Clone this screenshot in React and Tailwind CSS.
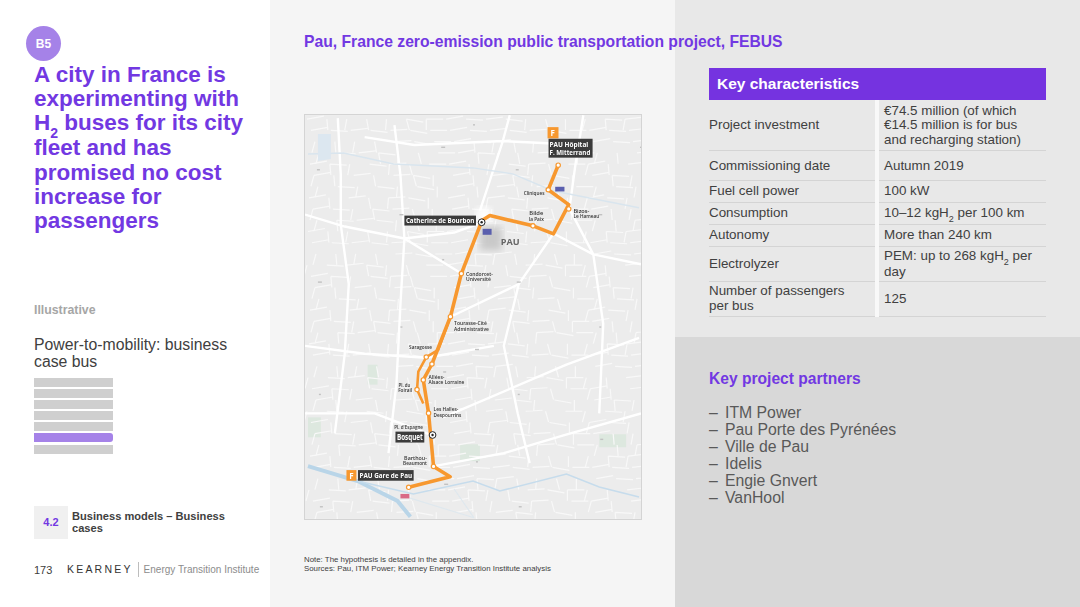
const rows = [
  { label: 'Project investment', value: <>€74.5 million (of which<br />€14.5 million is for bus<br />and recharging station)</>, h: 'h-[51px]' },
  { label: 'Commissioning date', value: 'Autumn 2019', h: 'h-[30px]' },
  { label: 'Fuel cell power', value: '100 kW', h: 'h-[21.5px]' },
  { label: 'Consumption', value: <>10–12 kgH<Sub /> per 100 km</>, h: 'h-[22px]' },
  { label: 'Autonomy', value: 'More than 240 km', h: 'h-[22px]' },
  { label: 'Electrolyzer', value: <>PEM: up to 268 kgH<Sub /> per<br />day</>, h: 'h-[35px]' },
  { label: <>Number of passengers<br />per bus</>, value: '125', h: 'h-[35px]' },
];

const partners = ['ITM Power', 'Pau Porte des Pyrénées', 'Ville de Pau', 'Idelis', 'Engie Gnvert', 'VanHool'];

function Sub() {
  return <sub className="text-[9px] leading-none align-[-3px]">2</sub>;
}

// main roads of the map, in map coordinates
const bigRoads = [
  'M33 3 L36 60 L36 110 L44 170 L40 240 L30 320',
  'M0 100 L40 112 L100 124 L150 118 L178 108',
  'M176 96 L199 26 L206 0',
  'M139 304 L263 251 L336 224',
  'M0 232 L60 240 L122 244 L190 232',
  'M0 300 L70 300 L128 322',
  'M338 150 L290 140 L250 119 L215 170 L200 232 L214 300 L226 350',
  'M280 0 L272 50 L266 94 L290 140 L300 210 L296 300',
  'M130 353 L200 340 L260 322 L338 300',
  'M60 22 L110 30 L199 26 L280 30',
  'M90 10 L96 60 L100 124 L96 190 L92 270 L84 340',
  'M146 203 L215 170 M157 159 L100 124',
];

// street mesh: rough but deterministic
const minorRoads = [];
const flecks = [];
for (let i = 0; i < 36; i++) {
  const y = 4 + i * 11.3;
  for (let j = 0; j < 17; j++) {
    const x = 2 + j * 20 + ((i * 17) % 13);
    const tilt = ((i * 7 + j * 11) % 7) - 3;
    const hash = (i * 13 + j * 29 + i * j) % 10;
    if (hash < 6) minorRoads.push(`M${x} ${y} L${x + 17} ${y + tilt}`);
    if (hash > 3) minorRoads.push(`M${x} ${y} L${x + tilt} ${y + 11}`);
    if (hash === 2 && j % 2 === 0) flecks.push([x + 7, y + 5, 2 + (i % 3), 1.4]);
  }
}

const stops = [
  [254.7, 50.3], [244.7, 75], [265.3, 94.3], [229.3, 111.3], [157.3, 159.3], [146.3, 202.7],
  [127.7, 250.3], [122, 243.3], [119, 266.3], [112.7, 276], [124.3, 299.7], [129.3, 353.3], [104.3, 374.3],
];

// x, baseline, text, anchor, width
const labels = [
  [241, 80, 'Cliniques', 'end', 21], [270, 98.3, 'Bizos-', 'start', 16], [270, 103.7, 'Le Hameau', 'start', 26],
  [232.7, 100.3, 'Bilde', 'middle', 14], [232.7, 106.7, 'la Paix', 'middle', 15],
  [162, 161.7, 'Condorcet-', 'start', 27], [162, 167.3, 'Université', 'start', 25],
  [150, 211, 'Tourasse-Cité', 'start', 33], [150, 216.7, 'Administrative', 'start', 35],
  [127.7, 235.7, 'Saragosse', 'end', 23], [124.3, 265, 'Allées-', 'start', 16], [124.3, 270, 'Alsace Lorraine', 'start', 36],
  [106, 273, 'Pl. du', 'end', 12], [107.7, 278.3, 'Foirail', 'end', 14],
  [129.3, 297.7, 'Les Halles-', 'start', 25], [129.3, 303.3, 'Despourrins', 'start', 28],
  [118.7, 316, "Pl. d'Espagne", 'end', 29], [122.7, 346.7, 'Barthou-', 'end', 23], [122.7, 352, 'Beaumont', 'end', 24],
];

function MapLabel({ x, y, w, h, text, size = 8 }) {
  return (
    <g>
      <rect x={x} y={y} width={w} height={h} fill="#3b3b3b" />
      <text x={x + 1.5} y={y + h - 2.6} fontSize={size} fontWeight="700" fill="#fff" textLength={w - 3} lengthAdjust="spacingAndGlyphs">{text}</text>
    </g>
  );
}

function RouteMap() {
  return (
    <svg viewBox="0 0 338 406" className="w-[338px] h-[406px] block border border-[#d4d4d4] blur-[0.4px]" fontFamily="Open Sans, Liberation Sans, sans-serif">
      <defs>
        <filter id="soft"><feGaussianBlur stdDeviation="4" /></filter>
      </defs>
      <rect width="338" height="406" fill="#ececec" />
      {/* parks */}
      <rect x="3" y="304" width="13" height="20" fill="#dde8df" />
      <rect x="63" y="251" width="10" height="20" fill="#dde8df" />
      <rect x="296" y="321" width="27" height="13" fill="#dde8df" />
      <rect x="156" y="331" width="20" height="17" fill="#dde8df" />
      <path d={minorRoads.join(' ')} stroke="#f8f8f8" strokeWidth="1.2" fill="none" />
      <path d={bigRoads.join(' ')} stroke="#ffffff" strokeWidth="2.4" fill="none" strokeLinejoin="round" />
      {flecks.map(([x, y, w, h]) => (
        <rect key={`${x}-${y}`} x={x} y={y} width={w} height={h} fill="#c2c2c2" />
      ))}
      {/* shadow around the centre */}
      <rect x="176" y="112" width="22" height="24" fill="#c9c9c9" filter="url(#soft)" />
      <circle cx="180" cy="100" r="8" fill="#fff" filter="url(#soft)" />
      {/* water */}
      <path d="M3 39 L39 38 L89 49 L169 53 L209 59 L249 76 L336 93" stroke="#d9e5ee" strokeWidth="1.5" fill="none" />
      <path d="M13 19 L26 19 L26 44 L13 46 Z" fill="#dce7f0" />
      <path d="M3 353 L53 368 L93 388 L106 404" stroke="#b9d5e8" strokeWidth="4" fill="none" />
      <path d="M53 368 L109 381 L169 368 L196 378 L263 361 L296 374 L336 384" stroke="#c6dcec" strokeWidth="1.5" fill="none" />
      <path d="M150 376 L170 405 M105 385 L170 405" stroke="#dfe8ee" strokeWidth="1.2" fill="none" />

      {/* route */}
      <path
        d="M254.7 50.3 L244.7 75 L265.3 90 L250 119.3 L229.3 111.3 L186 101 L178 106 L157.3 159.3 L146.3 202.7 L127.7 250.3 L119 266.3 L124.3 299.7 L129.3 353.3 L146 363.7 L104.3 374.3"
        stroke="#f7982f" strokeWidth="3.6" fill="none" strokeLinejoin="round"
      />
      <path d="M146.3 202.7 L134 236 L122 243.3 L114 258 L112.7 276 L119 290" stroke="#f7982f" strokeWidth="2.6" fill="none" strokeLinejoin="round" />
      {stops.map(([x, y]) => (
        <circle key={`${x}-${y}`} cx={x} cy={y} r="2.2" fill="#fff" stroke="#f7982f" strokeWidth="1.2" />
      ))}
      <circle cx="177.7" cy="107.7" r="3.4" fill="#fff" stroke="#222" strokeWidth="1" />
      <circle cx="177.7" cy="107.7" r="1.2" fill="#222" />
      <circle cx="128.3" cy="321.7" r="3.4" fill="#fff" stroke="#222" strokeWidth="1" />
      <circle cx="128.3" cy="321.7" r="1.2" fill="#222" />

      {/* stickers */}
      <rect x="244" y="12" width="11" height="11.3" fill="#f7982f" />
      <text x="247" y="21" fontSize="8" fontWeight="700" fill="#fff">F</text>
      <rect x="245" y="23.7" width="44.3" height="19" fill="#3b3b3b" />
      <text x="246" y="32" fontSize="7" fontWeight="700" fill="#fff" textLength="39" lengthAdjust="spacingAndGlyphs">PAU Hôpital</text>
      <text x="246" y="40.5" fontSize="7" fontWeight="700" fill="#fff" textLength="41" lengthAdjust="spacingAndGlyphs">F. Mitterrand</text>
      <MapLabel x={100} y={101} w={72} h={10} text="Catherine de Bourbon" size={7.4} />
      <MapLabel x={91} y={318.3} w={29} h={11} text="Bosquet" size={8.4} />
      <rect x="41.7" y="357" width="10" height="10.7" fill="#f7982f" />
      <text x="44.5" y="365.5" fontSize="8" fontWeight="700" fill="#fff">F</text>
      <MapLabel x={53.3} y={357} w={56} h={10.7} text="PAU Gare de Pau" size={7.6} />
      <text x="197" y="131" fontSize="9" fontWeight="700" fill="#666" textLength="19" lengthAdjust="spacingAndGlyphs">PAU</text>
      <rect x="178.7" y="114.3" width="9" height="6" fill="#5a5fae" />
      <rect x="251.7" y="72" width="9.3" height="4.7" fill="#5a5fae" />
      <rect x="96" y="381" width="9" height="4.5" fill="#d96a86" />

      {labels.map(([x, y, text, anchor, width]) => (
        <text key={text} x={x} y={y} fontSize="5.6" fontWeight="600" fill="#333" textAnchor={anchor} textLength={width} lengthAdjust="spacingAndGlyphs">{text}</text>
      ))}
    </svg>
  );
}

export default function App() {
  return (
    <div className="w-[1080px] h-[607px] flex overflow-hidden bg-white font-['Liberation_Sans',Arial,sans-serif] text-[#404040]">
      {/* Left column */}
      <div className="w-[270px] shrink-0 flex flex-col pl-[34px] pr-2 pt-[26px]">
        <div className="w-[35px] h-[35px] -ml-2 rounded-full bg-[#a582e8] flex items-center justify-center text-white text-[12px] font-bold">B5</div>
        <h1 className="mt-[2px] text-[22.5px] leading-[24.2px] font-bold text-[#7238e2]">
          A city in France is<br />experimenting with<br />H<sub className="text-[14px] leading-none align-[-4px]">2</sub> buses for its city<br />fleet and has<br />promised no cost<br />increase for<br />passengers
        </h1>
        <div className="mt-[70px] text-[12.3px] leading-[14px] font-bold text-[#a6a6a6]">Illustrative</div>
        <div className="mt-[19px] text-[15.8px] leading-[17px] text-[#404040] whitespace-nowrap">Power-to-mobility: business<br />case bus</div>
        <div className="mt-[8px] flex flex-col gap-[2.5px] w-[79px]">
          {[0, 1, 2, 3, 4].map((i) => <div key={i} className="h-[8.5px] bg-[#cfcfcf]" />)}
          <div className="h-[9px] rounded-r-[3px] bg-[#a582e8]" />
          <div className="h-[9px] bg-[#cfcfcf]" />
        </div>
        <div className="mt-[52px] flex items-center gap-[4px]">
          <div className="w-[34px] h-[33px] bg-[#f0f0f0] flex items-center justify-center text-[11px] font-bold text-[#7238e2]">4.2</div>
          <div className="text-[11.1px] leading-[12.4px] font-bold text-[#404040]">Business models – Business<br />cases</div>
        </div>
        <div className="mt-[23px] flex items-center text-[11px] text-[#404040]">
          <span className="w-[33px] shrink-0">173</span>
          <span className="tracking-[2.2px] text-[10.5px] text-[#333] shrink-0">KEARNEY</span>
          <span className="ml-[5px] h-[15px] border-l border-[#bdbdbd] shrink-0" />
          <span className="ml-[5px] text-[10px] text-[#8c8c8c] whitespace-nowrap">Energy Transition Institute</span>
        </div>
      </div>

      {/* Middle column */}
      <div className="w-[405px] shrink-0 bg-[#f5f5f5] pl-[34px] pt-[33px] flex flex-col">
        <h2 className="text-[15.7px] leading-[18px] font-bold text-[#7238e2] whitespace-nowrap relative z-10">Pau, France zero-emission public transportation project, FEBUS</h2>
        <div className="mt-[63px]"><RouteMap /></div>
        <div className="mt-[36px] text-[7.87px] leading-[8.6px] text-[#404040]">
          Note: The hypothesis is detailed in the appendix.<br />Sources: Pau, ITM Power; Kearney Energy Transition Institute analysis
        </div>
      </div>

      {/* Right column */}
      <div className="flex-1 flex flex-col">
        <div className="h-[337px] bg-[#e8e8e8] pl-[34px] pr-[34px] pt-[68px]">
          <div className="h-[32px] bg-[#7533e0] text-white font-bold text-[15.5px] flex items-center pl-[8px]">Key characteristics</div>
          {rows.map((row, i) => (
            <div key={i} className={`flex ${row.h} text-[13.4px] leading-[14.6px]`}>
              <div className="w-[166px] flex items-center pt-[1px] border-b border-[#d4d4d4]"><span>{row.label}</span></div>
              <div className="w-[4px] bg-[#f8f8f8]" />
              <div className="flex-1 flex items-center pl-[5px] pt-[1px] border-b border-[#d4d4d4]"><span>{row.value}</span></div>
            </div>
          ))}
        </div>
        <div className="flex-1 bg-[#d8d8d8] pl-[34px] pt-[33px]">
          <div className="text-[15.6px] leading-[18px] font-bold text-[#7238e2]">Key project partners</div>
          <ul className="mt-[16px] text-[15.8px] leading-[17px] text-[#595959]">
            {partners.map((name) => (
              <li key={name} className="flex">
                <span className="w-[16px]">–</span>
                <span>{name}</span>
              </li>
            ))}
          </ul>
        </div>
      </div>
    </div>
  );
}
